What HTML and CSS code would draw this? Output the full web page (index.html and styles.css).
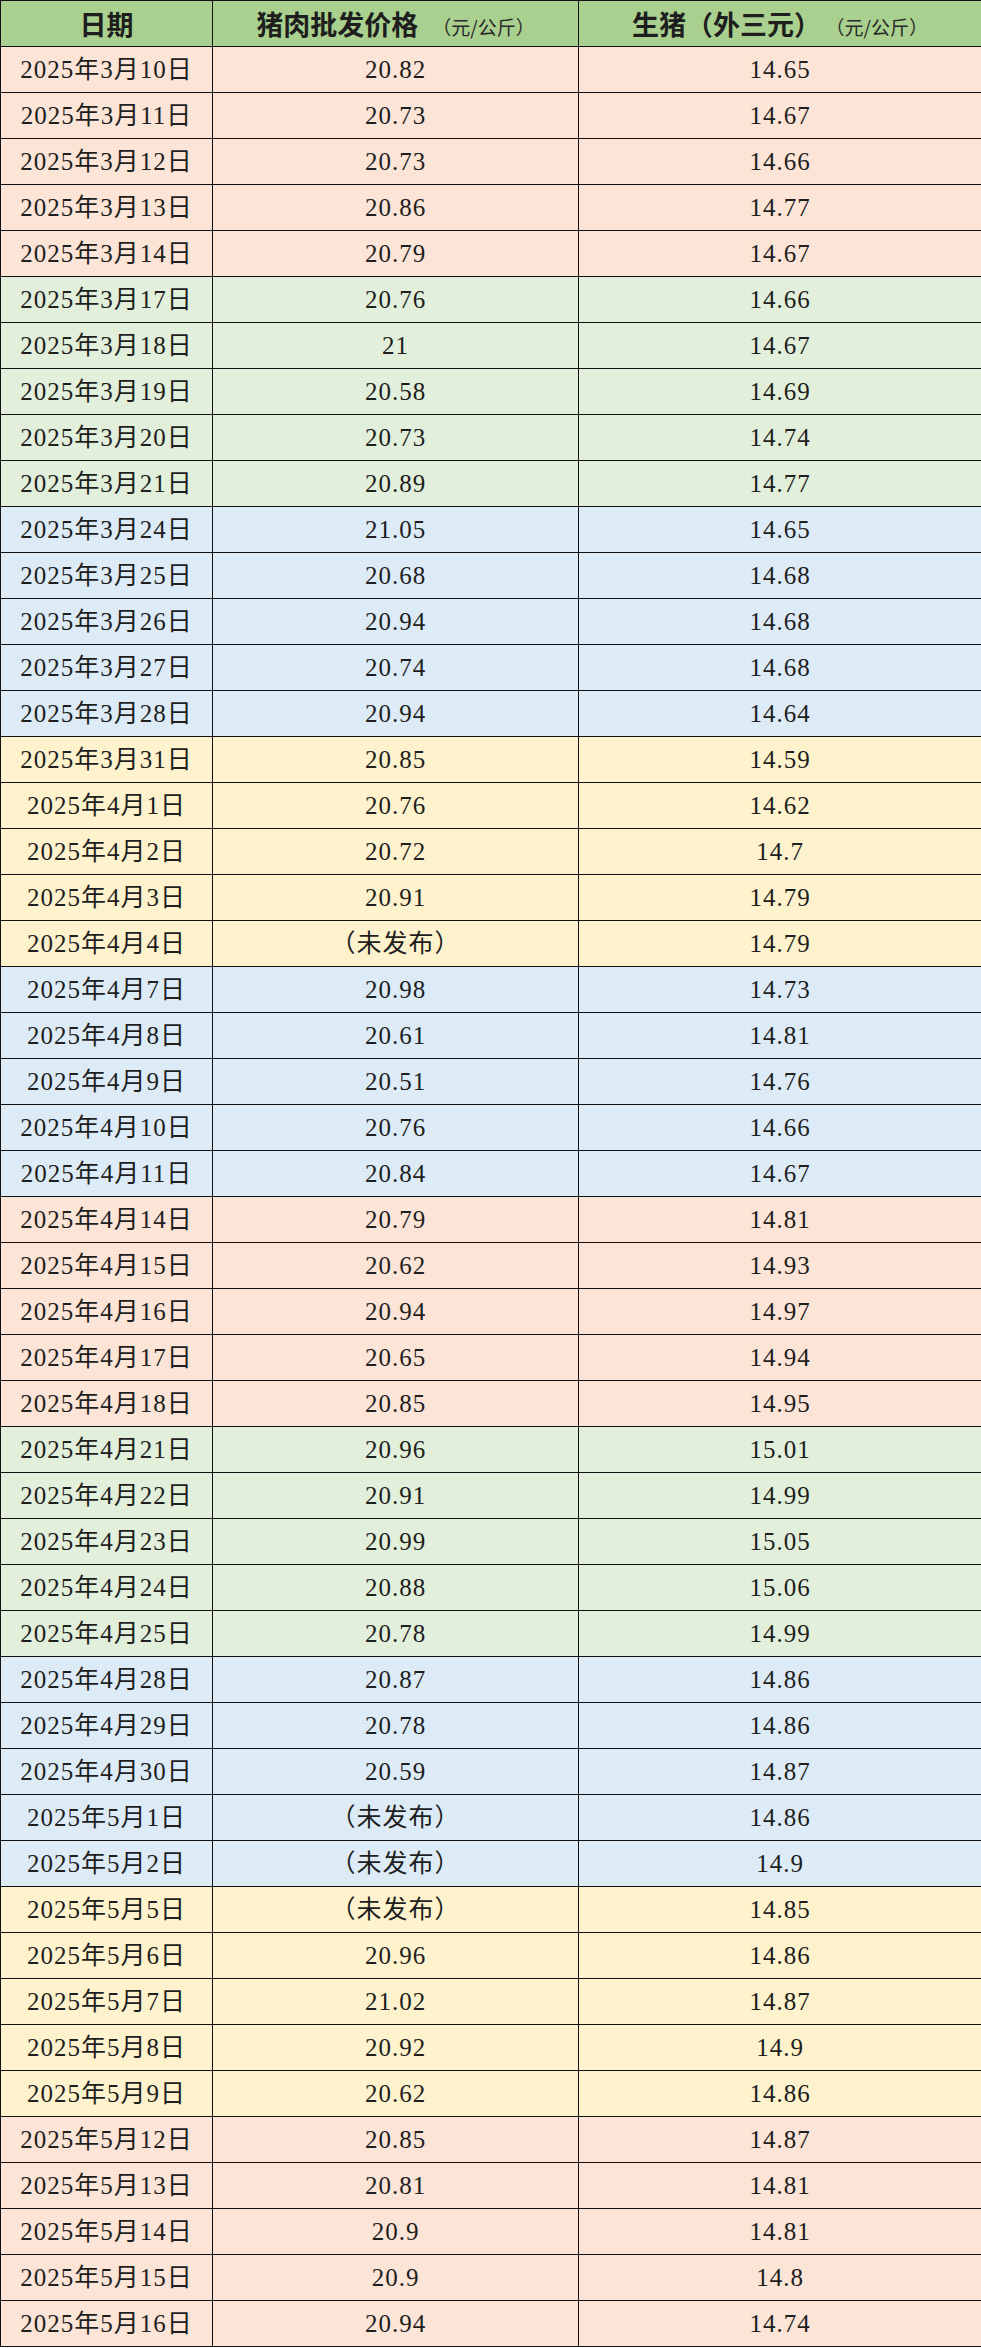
FILE: index.html
```html
<!DOCTYPE html>
<html lang="zh-CN">
<head>
<meta charset="utf-8">
<title>猪肉批发价格</title>
<link rel="stylesheet" href="styles.css">
</head>
<body>
<table class="price-table">
  <colgroup>
    <col class="c-date">
    <col class="c-pork">
    <col class="c-hog">
  </colgroup>
  <thead>
    <tr>
      <th>日期</th>
      <th>猪肉批发价格<span class="unit">（元/公斤）</span></th>
      <th>生猪（外三元）<span class="unit">（元/公斤）</span></th>
    </tr>
  </thead>
  <tbody>
    <tr class="peach"><td>2025年3月10日</td><td>20.82</td><td>14.65</td></tr>
    <tr class="peach"><td>2025年3月11日</td><td>20.73</td><td>14.67</td></tr>
    <tr class="peach"><td>2025年3月12日</td><td>20.73</td><td>14.66</td></tr>
    <tr class="peach"><td>2025年3月13日</td><td>20.86</td><td>14.77</td></tr>
    <tr class="peach"><td>2025年3月14日</td><td>20.79</td><td>14.67</td></tr>
    <tr class="green"><td>2025年3月17日</td><td>20.76</td><td>14.66</td></tr>
    <tr class="green"><td>2025年3月18日</td><td>21</td><td>14.67</td></tr>
    <tr class="green"><td>2025年3月19日</td><td>20.58</td><td>14.69</td></tr>
    <tr class="green"><td>2025年3月20日</td><td>20.73</td><td>14.74</td></tr>
    <tr class="green"><td>2025年3月21日</td><td>20.89</td><td>14.77</td></tr>
    <tr class="blue"><td>2025年3月24日</td><td>21.05</td><td>14.65</td></tr>
    <tr class="blue"><td>2025年3月25日</td><td>20.68</td><td>14.68</td></tr>
    <tr class="blue"><td>2025年3月26日</td><td>20.94</td><td>14.68</td></tr>
    <tr class="blue"><td>2025年3月27日</td><td>20.74</td><td>14.68</td></tr>
    <tr class="blue"><td>2025年3月28日</td><td>20.94</td><td>14.64</td></tr>
    <tr class="yellow"><td>2025年3月31日</td><td>20.85</td><td>14.59</td></tr>
    <tr class="yellow"><td>2025年4月1日</td><td>20.76</td><td>14.62</td></tr>
    <tr class="yellow"><td>2025年4月2日</td><td>20.72</td><td>14.7</td></tr>
    <tr class="yellow"><td>2025年4月3日</td><td>20.91</td><td>14.79</td></tr>
    <tr class="yellow"><td>2025年4月4日</td><td>（未发布）</td><td>14.79</td></tr>
    <tr class="blue"><td>2025年4月7日</td><td>20.98</td><td>14.73</td></tr>
    <tr class="blue"><td>2025年4月8日</td><td>20.61</td><td>14.81</td></tr>
    <tr class="blue"><td>2025年4月9日</td><td>20.51</td><td>14.76</td></tr>
    <tr class="blue"><td>2025年4月10日</td><td>20.76</td><td>14.66</td></tr>
    <tr class="blue"><td>2025年4月11日</td><td>20.84</td><td>14.67</td></tr>
    <tr class="peach"><td>2025年4月14日</td><td>20.79</td><td>14.81</td></tr>
    <tr class="peach"><td>2025年4月15日</td><td>20.62</td><td>14.93</td></tr>
    <tr class="peach"><td>2025年4月16日</td><td>20.94</td><td>14.97</td></tr>
    <tr class="peach"><td>2025年4月17日</td><td>20.65</td><td>14.94</td></tr>
    <tr class="peach"><td>2025年4月18日</td><td>20.85</td><td>14.95</td></tr>
    <tr class="green"><td>2025年4月21日</td><td>20.96</td><td>15.01</td></tr>
    <tr class="green"><td>2025年4月22日</td><td>20.91</td><td>14.99</td></tr>
    <tr class="green"><td>2025年4月23日</td><td>20.99</td><td>15.05</td></tr>
    <tr class="green"><td>2025年4月24日</td><td>20.88</td><td>15.06</td></tr>
    <tr class="green"><td>2025年4月25日</td><td>20.78</td><td>14.99</td></tr>
    <tr class="blue"><td>2025年4月28日</td><td>20.87</td><td>14.86</td></tr>
    <tr class="blue"><td>2025年4月29日</td><td>20.78</td><td>14.86</td></tr>
    <tr class="blue"><td>2025年4月30日</td><td>20.59</td><td>14.87</td></tr>
    <tr class="blue"><td>2025年5月1日</td><td>（未发布）</td><td>14.86</td></tr>
    <tr class="blue"><td>2025年5月2日</td><td>（未发布）</td><td>14.9</td></tr>
    <tr class="yellow"><td>2025年5月5日</td><td>（未发布）</td><td>14.85</td></tr>
    <tr class="yellow"><td>2025年5月6日</td><td>20.96</td><td>14.86</td></tr>
    <tr class="yellow"><td>2025年5月7日</td><td>21.02</td><td>14.87</td></tr>
    <tr class="yellow"><td>2025年5月8日</td><td>20.92</td><td>14.9</td></tr>
    <tr class="yellow"><td>2025年5月9日</td><td>20.62</td><td>14.86</td></tr>
    <tr class="peach"><td>2025年5月12日</td><td>20.85</td><td>14.87</td></tr>
    <tr class="peach"><td>2025年5月13日</td><td>20.81</td><td>14.81</td></tr>
    <tr class="peach"><td>2025年5月14日</td><td>20.9</td><td>14.81</td></tr>
    <tr class="peach"><td>2025年5月15日</td><td>20.9</td><td>14.8</td></tr>
    <tr class="peach"><td>2025年5月16日</td><td>20.94</td><td>14.74</td></tr>
  </tbody>
</table>
</body>
</html>
```

FILE: styles.css
```css
html, body {
  margin: 0;
  padding: 0;
  background: #ffffff;
}

.price-table {
  width: 981px;
  border-collapse: collapse;
  table-layout: fixed;
  font-family: "Liberation Serif", "Noto Sans CJK SC", serif;
  color: #1e1e1e;
}

.c-date { width: 212px; }
.c-pork { width: 366px; }
.c-hog { width: 403px; }

.price-table th,
.price-table td {
  border: 1px solid #111111;
  height: 46px;
  padding: 0;
  text-align: center;
  vertical-align: middle;
  white-space: nowrap;
  box-sizing: border-box;
}

.price-table thead tr {
  background: #a9d08e;
}

.price-table th {
  font-size: 27px;
  font-weight: 700;
  font-family: "Noto Sans CJK SC", sans-serif;
  line-height: 1;
}

.price-table th .unit {
  font-size: 19px;
  font-weight: 400;
  margin-left: 14px;
  color: #2a2a2a;
}

.price-table td {
  font-size: 25px;
  letter-spacing: 1px;
  line-height: 1;
}

.peach { background: #fce4d6; }
.green { background: #e2efda; }
.blue { background: #ddebf7; }
.yellow { background: #fff2cc; }
```
